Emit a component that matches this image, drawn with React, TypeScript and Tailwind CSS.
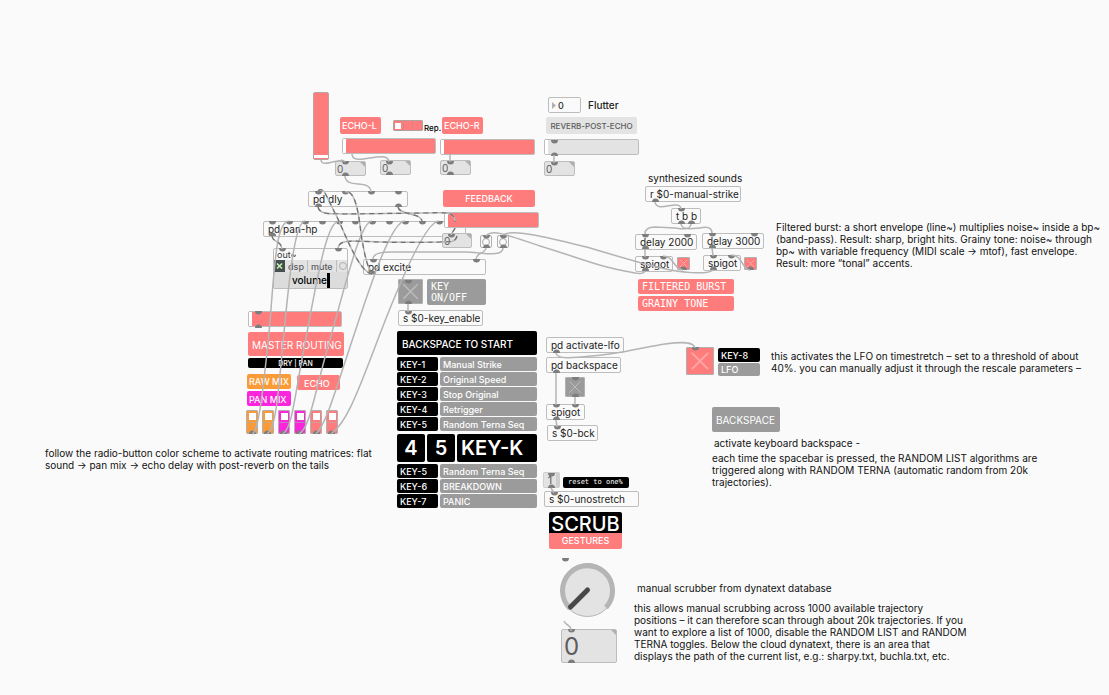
import React from "react";

type Placed = { at: string; children?: React.ReactNode };

/** Object box: white body, thin grey outline. */
function Obj({ at, children }: Placed) {
  return (
    <div
      className={`absolute flex h-4 items-center rounded-[2px] border border-[#bdbdbd] bg-[#fafafa] pl-1 text-[10px] whitespace-pre text-[#222] ${at}`}
    >
      {children}
    </div>
  );
}

/** Flat coloured label. */
function Tag({ at, children }: Placed) {
  return <div className={`absolute flex items-center rounded-[2px] whitespace-pre ${at}`}>{children}</div>;
}

/** Free text comment, one entry per line. */
function Note({ at, lines }: { at: string; lines: string[] }) {
  return (
    <p className={`absolute text-[10px] leading-3 whitespace-pre text-[#111] ${at}`}>
      {lines.map((line) => (
        <span key={line} className="block">
          {line}
        </span>
      ))}
    </p>
  );
}

function Fader({ at, label }: { at: string; label: string }) {
  return (
    <input
      type="range"
      min={0}
      max={127}
      defaultValue={0}
      aria-label={label}
      className={`absolute m-0 h-4 appearance-none rounded-[2px] border border-[#bdbdbd] [&::-webkit-slider-thumb]:h-[14px] [&::-webkit-slider-thumb]:w-[3px] [&::-webkit-slider-thumb]:appearance-none [&::-webkit-slider-thumb]:bg-white ${at}`}
    />
  );
}

function NumberBox({
  at,
  label,
  size = "pl-px text-[10px]",
}: {
  at: string;
  label: string;
  size?: string;
}) {
  return (
    <div className={`absolute rounded-[2px] border border-[#bdbdbd] bg-[#e3e3e3] ${at}`}>
      <input
        defaultValue="0"
        aria-label={label}
        className={`block h-full w-full bg-transparent text-[#5c5c5c] outline-none ${size}`}
      />
      <svg viewBox="0 0 5 5" className="absolute top-0 right-0 h-[5px] w-[5px]">
        <path d="M0 0H5V5Z" fill="#b0b0b0" />
      </svg>
    </div>
  );
}

function Toggle({ at, label, stroke, width = 1 }: { at: string; label: string; stroke: string; width?: number }) {
  return (
    <label className={`absolute block rounded-[1px] border border-[#b0b0b0] ${at}`}>
      <input type="checkbox" aria-label={label} className="absolute inset-0 h-full w-full appearance-none" />
      <svg viewBox="0 0 24 24" className="block h-full w-full">
        <path
          d="M4.500 4.500 19.500 19.500M19.500 4.500 4.500 19.500"
          stroke={stroke}
          strokeWidth={width}
          fill="none"
          vectorEffect="non-scaling-stroke"
        />
      </svg>
    </label>
  );
}

function Bang({ at, label }: { at: string; label: string }) {
  return (
    <button
      aria-label={label}
      className={`absolute flex h-[13px] w-3 items-center justify-center rounded-[2px] border border-[#b0b0b0] bg-[#fafafa] ${at}`}
    >
      <i className="h-2 w-2 rounded-full border border-[#a8a8a8]" />
    </button>
  );
}

function CellRadio({ tone, name }: { tone: string; name: string }) {
  return (
    <fieldset aria-label={name} className={`flex h-6 w-3 flex-col rounded-[2px] border border-[#b0b0b0] ${tone}`}>
      <label className="flex h-3 items-center justify-center border-b border-[#b0b0b0]/60">
        <input
          type="radio"
          name={name}
          aria-label={`${name} on`}
          defaultChecked
          className="h-[7px] w-[7px] appearance-none checked:bg-white"
        />
      </label>
      <label className="flex flex-1 items-center justify-center">
        <input
          type="radio"
          name={name}
          aria-label={`${name} off`}
          className="h-[7px] w-[7px] appearance-none checked:bg-white"
        />
      </label>
    </fieldset>
  );
}

function KeyRow({ k, name }: { k: string; name: string }) {
  return (
    <div className="flex h-[14px] gap-[2px] text-[9px] font-medium text-white">
      <div className="flex w-[41px] items-center rounded-[2px] bg-black pl-[3px]">{k}</div>
      <div className="flex flex-1 items-center rounded-[2px] bg-[#9b9b9b] pl-[3px]">{name}</div>
    </div>
  );
}

const upperKeys = [
  ["KEY-1", "Manual Strike"],
  ["KEY-2", "Original Speed"],
  ["KEY-3", "Stop Original"],
  ["KEY-4", "Retrigger"],
  ["KEY-5", "Random Terna Seq"],
];
const lowerKeys = [
  ["KEY-5", "Random Terna Seq"],
  ["KEY-6", "BREAKDOWN"],
  ["KEY-7", "PANIC"],
];

const routing = [
  ["raw left", "bg-[#fb9b38]"],
  ["raw right", "bg-[#fb9b38]"],
  ["pan left", "bg-[#fb26dc]"],
  ["pan right", "bg-[#fb26dc]"],
  ["echo left", "bg-[#ff7c7c]"],
  ["echo right", "bg-[#ff7c7c]"],
];

/** Inlets hang below the given point. */
const inlets: [number, number][] = [
  [345, 161], [389, 161], [450, 161], [554, 162], [554, 140],
  [318, 191], [345, 191], [371, 191], [398, 191],
  [272, 221], [289, 221], [305, 221], [322, 221], [339, 221], [355, 221], [372, 221], [389, 221], [405, 221], [422, 221], [439, 221],
  [282, 248], [338, 248], [373, 259], [476, 259], [451, 234], [486, 235], [503, 235],
  [408, 280], [408, 311], [258, 311],
  [681, 208], [645, 234], [687, 234], [712, 233], [754, 233], [645, 256], [663, 256], [713, 255], [731, 255],
  [695, 347], [575, 377], [556, 404], [575, 404], [557, 426], [551, 473], [554, 492], [565, 558], [571, 629],
];

/** Outlets rise above the given point. */
const outlets: [number, number][] = [
  [345, 176], [389, 175], [450, 175], [554, 156], [318, 207], [398, 207], [272, 236],
  [372, 274], [486, 248], [503, 248], [408, 304], [258, 328],
  [252, 434], [267, 434], [283, 434], [299, 434], [316, 434], [331, 434],
  [655, 202], [681, 224], [691, 224], [645, 249], [712, 248], [645, 271], [713, 270], [683, 270], [750, 270],
  [556, 353], [556, 373], [575, 397], [556, 420], [551, 488], [571, 663],
];

const cords = [
  "M321 160C322 169 342 156 345 162",
  "M352 154C352 168 388 148 389 162",
  "M345 176C346 190 370 178 371 192",
  "M450 154V162",
  "M554 155V163",
  "M655 202C657 214 680 198 681 209",
  "M691 224C690 230 684 229 675 228L655 227C647 227 645 230 645 234",
  "M681 224C682 230 690 229 700 228C708 226 712 228 712 233",
  "M645 249V257",
  "M712 248 713 256",
  "M663 256C674 256 674 270 683 270",
  "M731 255C743 255 742 270 750 270",
  "M486 236C492 228 510 236 540 246C570 255 592 264 615 269S643 275 645 271",
  "M503 235C512 228 550 238 590 248C620 257 640 263 657 267C680 273 708 275 713 270",
  "M486 248C485 254 477 252 476 259",
  "M503 248C503 258 480 252 465 252L390 252C378 252 373 254 373 259",
  "M408 304V312",
  "M252 434C258 432 262 400 268 343S274 221 289 221",
  "M267 434C276 428 278 395 283 343S294 221 305 221",
  "M283 434C292 428 294 400 305 343S326 221 339 221",
  "M299 434C310 428 314 395 329 343S360 221 372 221",
  "M316 434C326 424 334 395 350 347S390 221 405 221",
  "M331 434C345 424 355 400 375 347S425 221 439 221",
  "M556 353C557 361 580 357 602 355S650 346 665 344 694 341 695 348",
  "M556 373V405",
  "M575 397V405",
  "M556 420 557 427",
  "M551 488 554 493",
  "M564 621C566 626 572 625 571 631",
];

const signalCords = [
  "M318 207C320 216 334 213 345 214L425 213C442 213 455 210 455 222",
  "M398 207C400 216 422 212 422 222",
  "M272 236C273 243 281 240 282 249",
  "M455 228C454 231 452 232 451 235",
  "M457 236C455 244 448 241 440 242C400 243 375 242 355 241C345 241 339 242 338 248",
  "M372 274C358 272 344 230 335 213S324 186 318 191",
  "M372 274C366 265 364 250 362 240S358 188 345 192",
];

export default function App() {
  return (
    <main className="relative min-h-screen w-full bg-[#fafafa] font-['Inter',sans-serif] text-[9px] leading-none">
      {/* Echo section */}
      <input
        type="range"
        min={0}
        max={127}
        defaultValue={2}
        aria-label="Delay time"
        className="absolute top-[92px] left-[313px] m-0 h-[68px] w-4 appearance-none rounded-[2px] border border-[#b5a5a5] bg-[#ff7c7c] [direction:rtl] [writing-mode:vertical-lr] [&::-webkit-slider-thumb]:h-[3px] [&::-webkit-slider-thumb]:w-[14px] [&::-webkit-slider-thumb]:appearance-none [&::-webkit-slider-thumb]:bg-white"
      />
      <Tag at="left-[340px] top-[117px] h-[17px] w-[41px] bg-[#ff7c7c] pl-[2px] font-medium text-white">ECHO-L</Tag>
      <fieldset
        aria-label="Repeat"
        className="absolute top-[120px] left-[393px] flex h-[11px] w-[30px] rounded-[2px] border border-[#b0a0a0] bg-[#ff7c7c]"
      >
        {["1", "2", "3"].map((n) => (
          <label key={n} className="flex flex-1 items-center justify-center border-r border-[#c98a8a] last:border-r-0">
            <input
              type="radio"
              name="repeat"
              aria-label={`Repeat ${n}`}
              defaultChecked={n === "1"}
              className="h-[6px] w-[6px] appearance-none checked:bg-white"
            />
          </label>
        ))}
      </fieldset>
      <Tag at="left-[424px] top-[122px] h-3 text-[8px] font-medium text-black">Rep.</Tag>
      <Tag at="left-[442px] top-[117px] h-[17px] w-[41px] bg-[#ff7c7c] pl-[2px] font-medium text-white">ECHO-R</Tag>
      <Fader at="left-[342px] top-[138px] w-[94px] bg-[#ff7c7c]" label="Echo left" />
      <Fader at="left-[440px] top-[139px] w-[95px] bg-[#ff7c7c]" label="Echo right" />
      <NumberBox at="left-[335px] top-[161px] h-[15px] w-[31px]" label="Delay value" />
      <NumberBox at="left-[380px] top-[160px] h-[15px] w-[31px]" label="Echo left value" />
      <NumberBox at="left-[440px] top-[160px] h-[15px] w-[31px]" label="Echo right value" />

      <label className="absolute top-[97px] left-[548px] flex h-4 items-center gap-[7px] text-[10px] font-medium text-[#222]">
        <span className="flex h-4 w-[33px] items-center gap-[2px] rounded-[2px] border border-[#bdbdbd] pl-[3px]">
          <svg viewBox="0 0 4 7" className="h-[7px] w-1">
            <path d="M0 0 4 3.500 0 7Z" fill="#b0b0b0" />
          </svg>
          <input defaultValue="0" className="w-5 bg-transparent text-[9px] text-[#333] outline-none" />
        </span>
        Flutter
      </label>
      <Tag at="left-[546px] top-[117px] h-[17px] w-[91px] justify-center bg-[#e3e3e3] text-[8px] font-medium text-[#5c5c5c]">
        REVERB-POST-ECHO
      </Tag>
      <Fader at="left-[544px] top-[139px] w-[95px] bg-[#e3e3e3]" label="Reverb post echo" />
      <NumberBox at="left-[544px] top-[161px] h-[15px] w-[31px]" label="Reverb value" />

      <Obj at="left-[308px] top-[191px] w-[100px]">pd dly</Obj>
      <Obj at="left-[263px] top-[221px] w-[203px]">pd pan-hp</Obj>
      <Tag at="left-[443px] top-[190px] h-[17px] w-[92px] justify-center bg-[#ff7c7c] font-medium text-white">FEEDBACK</Tag>
      <NumberBox at="left-[442px] top-[233px] h-[15px] w-[30px]" label="Feedback value" />
      <Fader at="left-[444px] top-[212px] w-[95px] bg-[#ff7c7c]" label="Feedback" />
      <Bang at="left-[480px] top-[235px]" label="Burst bang" />
      <Bang at="left-[497px] top-[235px]" label="Tone bang" />
      <Obj at="left-[363px] top-[259px] w-[123px]">pd excite</Obj>

      {/* Output */}
      <section className="absolute top-[248px] left-[273px] flex w-[75px] flex-col rounded-[2px] border border-[#bdbdbd] bg-[#fafafa]">
        <h2 className="h-[11px] pl-[3px] text-[9px] leading-[11px] text-[#333]">out~</h2>
        <div className="flex h-3 items-center bg-[#e3e3e3] text-[9px] font-medium text-[#5c5c5c]">
          <label className="flex h-3 items-center gap-[3px]">
            <span className="relative h-3 w-[11px] bg-[#464f4f]">
              <input type="checkbox" defaultChecked className="absolute inset-0 appearance-none" />
              <svg viewBox="0 0 11 12" className="block h-3 w-[11px]">
                <path d="M3 3.500 8 8.500M8 3.500 3 8.500" stroke="#c8f5b0" strokeWidth="1.500" />
              </svg>
            </span>
            dsp
          </label>
          <button className="ml-[3px] h-3 border-x border-[#bdbdbd] px-[3px]">mute</button>
          <button aria-label="Mute bang" className="ml-[2px] h-2 w-2 rounded-full border border-[#b0b0b0]" />
        </div>
        <div className="flex h-4 items-center bg-[#dcdcdc] pl-[18px] text-[10px] font-medium text-black">
          volume
          <i className="h-[15px] w-[3px] bg-black" />
        </div>
      </section>

      <Toggle at="left-[398px] top-[279px] h-[25px] w-[25px] bg-[#9b9b9b]" label="Key enable" stroke="#bcbcbc" width={1.5} />
      <Tag at="left-[427px] top-[279px] h-[26px] w-[59px] bg-[#9b9b9b] pl-1 font-['DejaVu_Sans_Mono',monospace] text-[10px] leading-[11px] text-white">
        {"KEY\nON/OFF"}
      </Tag>
      <Obj at="left-[398px] top-[310px] w-[85px]">s $0-key_enable</Obj>

      {/* Master routing */}
      <Fader at="left-[248px] top-[311px] w-[94px] bg-[#ff7c7c]" label="Dry / pan" />
      <Tag at="left-[248px] top-[332px] h-6 w-24 bg-[#ff7c7c] pl-1 pt-[2px] text-[10px] text-white">MASTER ROUTING</Tag>
      <Tag at="left-[248px] top-[358px] h-[10px] w-[95px] justify-center bg-black text-[7px] font-medium text-white">DRY | PAN</Tag>
      <Tag at="left-[247px] top-[374px] h-[15px] w-[44px] bg-[#fb9b38] pl-[2px] font-medium text-white">RAW MIX</Tag>
      <Tag at="left-[297px] top-[375px] h-[15px] w-[43px] bg-[#ff7c7c] pt-[2px] pl-[7px] font-medium text-white">ECHO</Tag>
      <Tag at="left-[247px] top-[391px] h-[15px] w-[44px] bg-[#fb26dc] pt-[2px] pl-[2px] font-medium text-white">PAN MIX</Tag>
      <div className="absolute top-[410px] left-[246px] flex gap-1">
        {routing.map(([name, tone]) => (
          <CellRadio key={name} name={name} tone={tone} />
        ))}
      </div>

      {/* Keyboard map */}
      <section className="absolute top-[331px] left-[397px] flex w-[140px] flex-col gap-px">
        <h2 className="mb-px flex h-6 items-center rounded-[2px] bg-black pt-px pl-[5px] text-[10px] font-medium text-white">
          BACKSPACE TO START
        </h2>
        {upperKeys.map(([k, name]) => (
          <KeyRow key={k} k={k} name={name} />
        ))}
        <div className="mt-[2px] mb-px flex h-7 gap-[2px] text-[20px] font-semibold text-white">
          <div className="flex w-7 items-center justify-center rounded-[2px] bg-black">4</div>
          <div className="flex w-7 items-center justify-center rounded-[2px] bg-black">5</div>
          <div className="flex flex-1 items-center rounded-[2px] bg-black pl-1">KEY-K</div>
        </div>
        {lowerKeys.map(([k, name]) => (
          <KeyRow key={k} k={k} name={name} />
        ))}
      </section>

      {/* LFO and backspace */}
      <Obj at="left-[546px] top-[337px] w-[78px]">pd activate-lfo</Obj>
      <Obj at="left-[546px] top-[357px] w-[75px]">pd backspace</Obj>
      <Toggle at="left-[565px] top-[377px] h-5 w-5 bg-[#9b9b9b]" label="Backspace enable" stroke="#bcbcbc" />
      <Obj at="left-[546px] top-[404px] w-[39px]">spigot</Obj>
      <Obj at="left-[547px] top-[425px] w-[51px]">s $0-bck</Obj>
      <button className="absolute top-[472px] left-[543px] h-4 w-[17px] rounded-[2px] border border-r-4 border-[#cfcfcf] bg-[#e3e3e3] text-[11px] text-[#5c5c5c]">
        1
      </button>
      <Tag at="left-[563px] top-[477px] h-[11px] w-[66px] bg-black pl-[5px] font-['DejaVu_Sans_Mono',monospace] text-[7px] text-white">
        reset to one%
      </Tag>
      <Obj at="left-[544px] top-[491px] w-[95px]">s $0-unostretch</Obj>

      {/* Scrubber */}
      <div className="absolute top-[512px] left-[549px] w-[73px] overflow-hidden rounded-[2px] text-center font-medium text-white">
        <div className="h-[21px] bg-black text-[20px] leading-6">SCRUB</div>
        <div className="h-4 bg-[#ff7c7c] leading-4">GESTURES</div>
      </div>
      <svg className="absolute top-[561px] left-[559px] h-14 w-14" viewBox="0 0 56 56" role="img" aria-label="Scrub dial">
        <circle cx="28.500" cy="29" r="26.500" fill="#e3e3e3" stroke="#b5b5b5" strokeWidth="1" />
        <path d="M11 47.500A25 25 0 1 1 47 46.500" fill="none" stroke="#b5b5b5" strokeWidth="5" />
        <path d="M28.500 29 11.500 46" stroke="#484848" strokeWidth="5" strokeLinecap="round" />
      </svg>
      <NumberBox at="left-[561px] top-[629px] h-[34px] w-[56px]" label="Scrub position" size="pl-[2px] text-[24px]" />

      {/* Synthesized sounds */}
      <Note at="left-[648px] top-[172px]" lines={["synthesized sounds"]} />
      <Obj at="left-[645px] top-[186px] w-24">r $0-manual-strike</Obj>
      <Obj at="left-[671px] top-[208px] w-[30px]">t b b</Obj>
      <Obj at="left-[635px] top-[234px] w-[62px]">delay 2000</Obj>
      <Obj at="left-[702px] top-[233px] w-[62px]">delay 3000</Obj>
      <Obj at="left-[635px] top-[256px] w-[38px]">spigot</Obj>
      <Obj at="left-[703px] top-[255px] w-[38px]">spigot</Obj>
      <Toggle at="left-[677px] top-[257px] h-[13px] w-[13px] bg-[#ff7c7c]" label="Filtered burst" stroke="#ffa6a6" />
      <Toggle at="left-[744px] top-[257px] h-[13px] w-[13px] bg-[#ff7c7c]" label="Grainy tone" stroke="#ffa6a6" />
      <div className="absolute top-[279px] left-[638px] flex w-24 flex-col gap-[2px] font-['DejaVu_Sans_Mono',monospace] text-[10px] text-white">
        <div className="flex h-[15px] items-center rounded-[2px] bg-[#ff7c7c] pl-1">FILTERED BURST</div>
        <div className="flex h-[15px] items-center rounded-[2px] bg-[#ff7c7c] pl-1">GRAINY TONE</div>
      </div>

      <Toggle at="left-[686px] top-[347px] h-7 w-7 bg-[#ff7c7c]" label="LFO" stroke="#ffa6a6" width={2} />
      <div className="absolute top-[348px] left-[718px] flex w-[42px] flex-col gap-px font-medium text-white">
        <div className="flex h-[14px] items-center rounded-[2px] bg-black pl-[3px]">KEY-8</div>
        <div className="flex h-[13px] items-center rounded-[2px] bg-[#9b9b9b] pl-[3px]">LFO</div>
      </div>
      <Tag at="left-[712px] top-[407px] h-[25px] w-[68px] bg-[#9b9b9b] pl-1 text-[10px] text-white">BACKSPACE</Tag>

      {/* Notes */}
      <Note
        at="left-[776px] top-[221px]"
        lines={[
          "Filtered burst: a short envelope (line~) multiplies noise~ inside a bp~",
          "(band-pass). Result: sharp, bright hits. Grainy tone: noise~ through",
          "bp~ with variable frequency (MIDI scale → mtof), fast envelope.",
          "Result: more “tonal” accents.",
        ]}
      />
      <Note
        at="left-[771px] top-[350px]"
        lines={[
          "this activates the LFO on timestretch – set to a threshold of about",
          "40%. you can manually adjust it through the rescale parameters –",
        ]}
      />
      <Note at="left-[714px] top-[437px]" lines={["activate keyboard backspace -"]} />
      <Note
        at="left-[712px] top-[452px]"
        lines={[
          "each time the spacebar is pressed, the RANDOM LIST algorithms are",
          "triggered along with RANDOM TERNA (automatic random from 20k",
          "trajectories).",
        ]}
      />
      <Note
        at="left-[45px] top-[447px]"
        lines={[
          "follow the radio-button color scheme to activate routing matrices: flat",
          "sound → pan mix → echo delay with post-reverb on the tails",
        ]}
      />
      <Note at="left-[637px] top-[582px]" lines={["manual scrubber from dynatext database"]} />
      <Note
        at="left-[634px] top-[602px]"
        lines={[
          "this allows manual scrubbing across 1000 available trajectory",
          "positions – it can therefore scan through about 20k trajectories. If you",
          "want to explore a list of 1000, disable the RANDOM LIST and RANDOM",
          "TERNA toggles. Below the cloud dynatext, there is an area that",
          "displays the path of the current list, e.g.: sharpy.txt, buchla.txt, etc.",
        ]}
      />

      {/* Patch cords and ports */}
      <svg className="pointer-events-none absolute inset-0 h-full w-full overflow-visible" fill="none" aria-hidden="true">
        {inlets.map(([x, y]) => (
          <path key={`i${x}-${y}`} d={`M${x - 3} ${y}h7a3.500 3.500 0 0 1-7 0z`} fill="#7d7d7d" />
        ))}
        {outlets.map(([x, y]) => (
          <path key={`o${x}-${y}`} d={`M${x - 3} ${y}h7a3.500 3.500 0 0 0-7 0z`} fill="#7d7d7d" />
        ))}
        {cords.map((d) => (
          <path key={d} d={d} stroke="#b4b4b4" strokeWidth="1.500" />
        ))}
        {signalCords.map((d) => (
          <g key={d}>
            <path d={d} stroke="#b8b8b8" strokeWidth="1.500" />
            <path d={d} stroke="#707070" strokeWidth="1.200" strokeDasharray="5 4" />
          </g>
        ))}
      </svg>
    </main>
  );
}
